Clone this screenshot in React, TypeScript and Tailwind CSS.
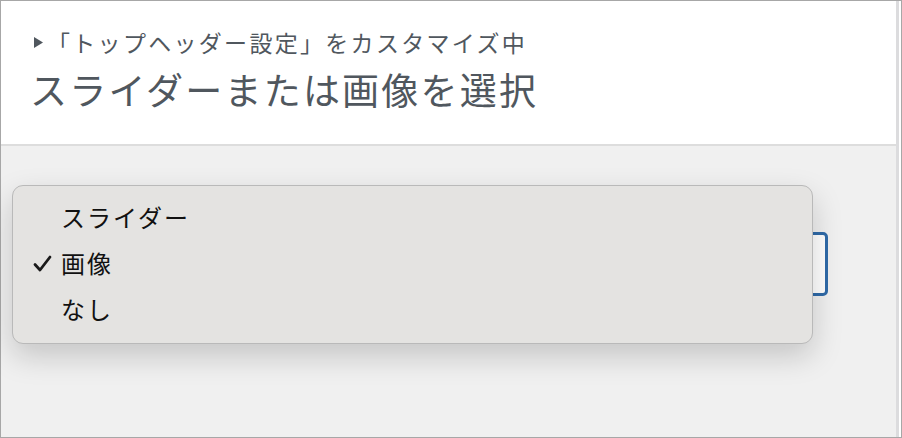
import React from "react";

const options = [
  { label: "スライダー", checked: false },
  { label: "画像", checked: true },
  { label: "なし", checked: false },
];

const jp = "font-['Noto_Sans_CJK_JP','Noto_Sans',sans-serif]";

const App = () => {
  return (
    <div className={`w-[902px] h-[438px] border border-[#a7a7a7] bg-white flex ${jp}`}>
      <div className="flex-1 flex flex-col">
        <div className="h-[145px] bg-white border-b-2 border-[#dddddd] pl-[31px] pt-[26px]">
          <div className="flex items-center text-[#50575e] text-[23px] leading-[30px] tracking-[2.3px]">
            <svg width="9" height="11" viewBox="0 0 9 11" className="mr-[9px] ml-[2px]">
              <path d="M0 0 L9 5.5 L0 11 Z" fill="#50575e" />
            </svg>
            <span className="-ml-[5px]">「トップヘッダー設定」をカスタマイズ中</span>
          </div>
          <h1 className="text-[#50575e] text-[37px] leading-[50px] mt-[7px] -ml-[2px] tracking-[2.2px]">
            スライダーまたは画像を選択
          </h1>
        </div>

        <div className="relative flex-1 bg-[#f0f0f0] pt-[86px] pl-[12px]">
          <div className="w-[815px] h-[64px] rounded-[5px] border-[3px] border-[#2f6aa8] bg-white" />

          <div className="absolute left-[11px] top-[39px] w-[801px] h-[159px] rounded-[11px] border border-[#b9b9b9] bg-[#e4e3e1] shadow-[0_12px_30px_rgba(0,0,0,0.18)] pt-[8px]">
            {options.map((opt) => (
              <div key={opt.label} className="h-[46px] flex items-center">
                <div className="w-[48px] flex justify-end pr-[9px]">
                  {opt.checked && (
                    <svg width="19" height="17" viewBox="0 0 19 17">
                      <path
                        d="M2 9.5 L7 15 L17 2"
                        fill="none"
                        stroke="#1a1a1a"
                        strokeWidth="2.8"
                        strokeLinecap="round"
                        strokeLinejoin="round"
                      />
                    </svg>
                  )}
                </div>
                <span className="text-[24px] font-normal text-[#111111] tracking-[2px]">
                  {opt.label}
                </span>
              </div>
            ))}
          </div>
        </div>
      </div>
      <div className="w-[3px] bg-[#dcdcde]" />
      <div className="w-[2px] bg-white" />
    </div>
  );
};

export default App;
